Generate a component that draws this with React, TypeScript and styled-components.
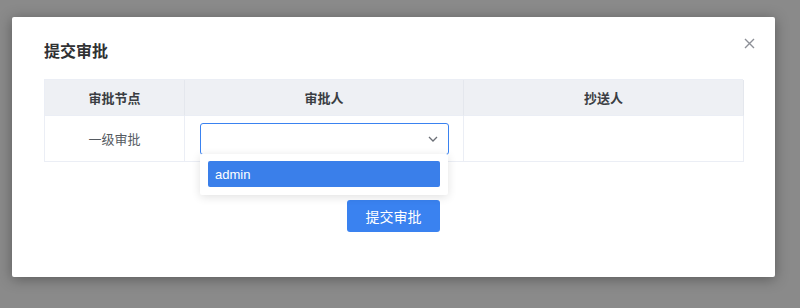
import React from "react";
import styled, { createGlobalStyle } from "styled-components";

const Global = createGlobalStyle`
  html, body { margin: 0; padding: 0; }
  body {
    background: #8a8a8a;
    font-family: "Liberation Sans", "Noto Sans CJK SC", sans-serif;
    width: 800px;
    height: 308px;
    overflow: hidden;
  }
`;

const Backdrop = styled.div`
  width: 800px;
  height: 308px;
  padding: 17px 25px 0 12px;
  box-sizing: border-box;
`;

const Modal = styled.div`
  position: relative;
  width: 763px;
  height: 260px;
  background: #fff;
  border-radius: 2px;
  box-shadow: 0 2px 14px rgba(0, 0, 0, 0.35);
  box-sizing: border-box;
  padding: 26px 32px 0 32px;
  display: flex;
  flex-direction: column;
`;

const Title = styled.div`
  font-size: 16px;
  line-height: 18px;
  font-weight: 700;
  color: #303133;
`;

const Close = styled.button`
  position: absolute;
  top: 20px;
  right: 20px;
  width: 12px;
  height: 12px;
  padding: 0;
  border: none;
  background: none;
  display: flex;
  align-items: center;
  justify-content: center;
`;

const Table = styled.div`
  margin-top: 18px;
  width: 699px;
  display: grid;
  grid-template-columns: 140px 279px 280px;
  border: 1px solid #ebeef5;
  border-right: none;
  border-bottom: none;
  box-sizing: border-box;
`;

const HeadCell = styled.div`
  height: 36px;
  background: #eef0f4;
  border-right: 1px solid #e4e7ed;
  border-bottom: 1px solid #ebeef5;
  box-sizing: border-box;
  display: flex;
  align-items: center;
  justify-content: center;
  font-size: 13px;
  font-weight: 700;
  color: #3a3d42;
`;

const Cell = styled.div<{ $pad?: boolean }>`
  height: 46px;
  border-right: 1px solid #ebeef5;
  border-bottom: 1px solid #ebeef5;
  box-sizing: border-box;
  display: flex;
  align-items: center;
  justify-content: center;
  font-size: 13px;
  color: #555a61;
  position: relative;
  padding: ${(p) => (p.$pad ? "0 14px 0 15px" : "0")};
`;

const Select = styled.div`
  width: 100%;
  height: 32px;
  border: 1px solid #3a82f0;
  border-radius: 3px;
  box-sizing: border-box;
  display: flex;
  align-items: center;
  justify-content: flex-end;
  padding-right: 10px;
  background: #fff;
`;

const Dropdown = styled.div`
  position: absolute;
  left: 15px;
  top: 38px;
  width: 248px;
  background: #fff;
  box-sizing: border-box;
  padding: 7px 8px 8px 8px;
  box-shadow: 0 2px 10px rgba(0, 0, 0, 0.12);
  border-radius: 2px;
  z-index: 5;
`;

const Option = styled.div`
  height: 26px;
  background: #3a7fea;
  border-radius: 2px;
  color: #fff;
  font-size: 13px;
  display: flex;
  align-items: center;
  padding-left: 7px;
`;

const Footer = styled.div`
  display: flex;
  justify-content: center;
  margin-top: 38px;
`;

const Button = styled.button`
  width: 93px;
  height: 32px;
  background: #3a82f0;
  border: none;
  border-radius: 3px;
  color: #fff;
  font-size: 14px;
  font-family: inherit;
  padding: 0;
`;

export default function App() {
  return (
    <>
      <Global />
      <Backdrop>
        <Modal>
          <Title>提交审批</Title>
          <Close aria-label="close">
            <svg width="11" height="11" viewBox="0 0 11 11">
              <path d="M1 1 L10 10 M10 1 L1 10" stroke="#8d9097" strokeWidth="1.4" />
            </svg>
          </Close>
          <Table>
            <HeadCell>审批节点</HeadCell>
            <HeadCell>审批人</HeadCell>
            <HeadCell>抄送人</HeadCell>
            <Cell>一级审批</Cell>
            <Cell $pad>
              <Select>
                <svg width="10" height="6" viewBox="0 0 10 6">
                  <path d="M1 1 L5 5 L9 1" fill="none" stroke="#6b6f76" strokeWidth="1.3" />
                </svg>
              </Select>
              <Dropdown>
                <Option>admin</Option>
              </Dropdown>
            </Cell>
            <Cell />
          </Table>
          <Footer>
            <Button>提交审批</Button>
          </Footer>
        </Modal>
      </Backdrop>
    </>
  );
}
